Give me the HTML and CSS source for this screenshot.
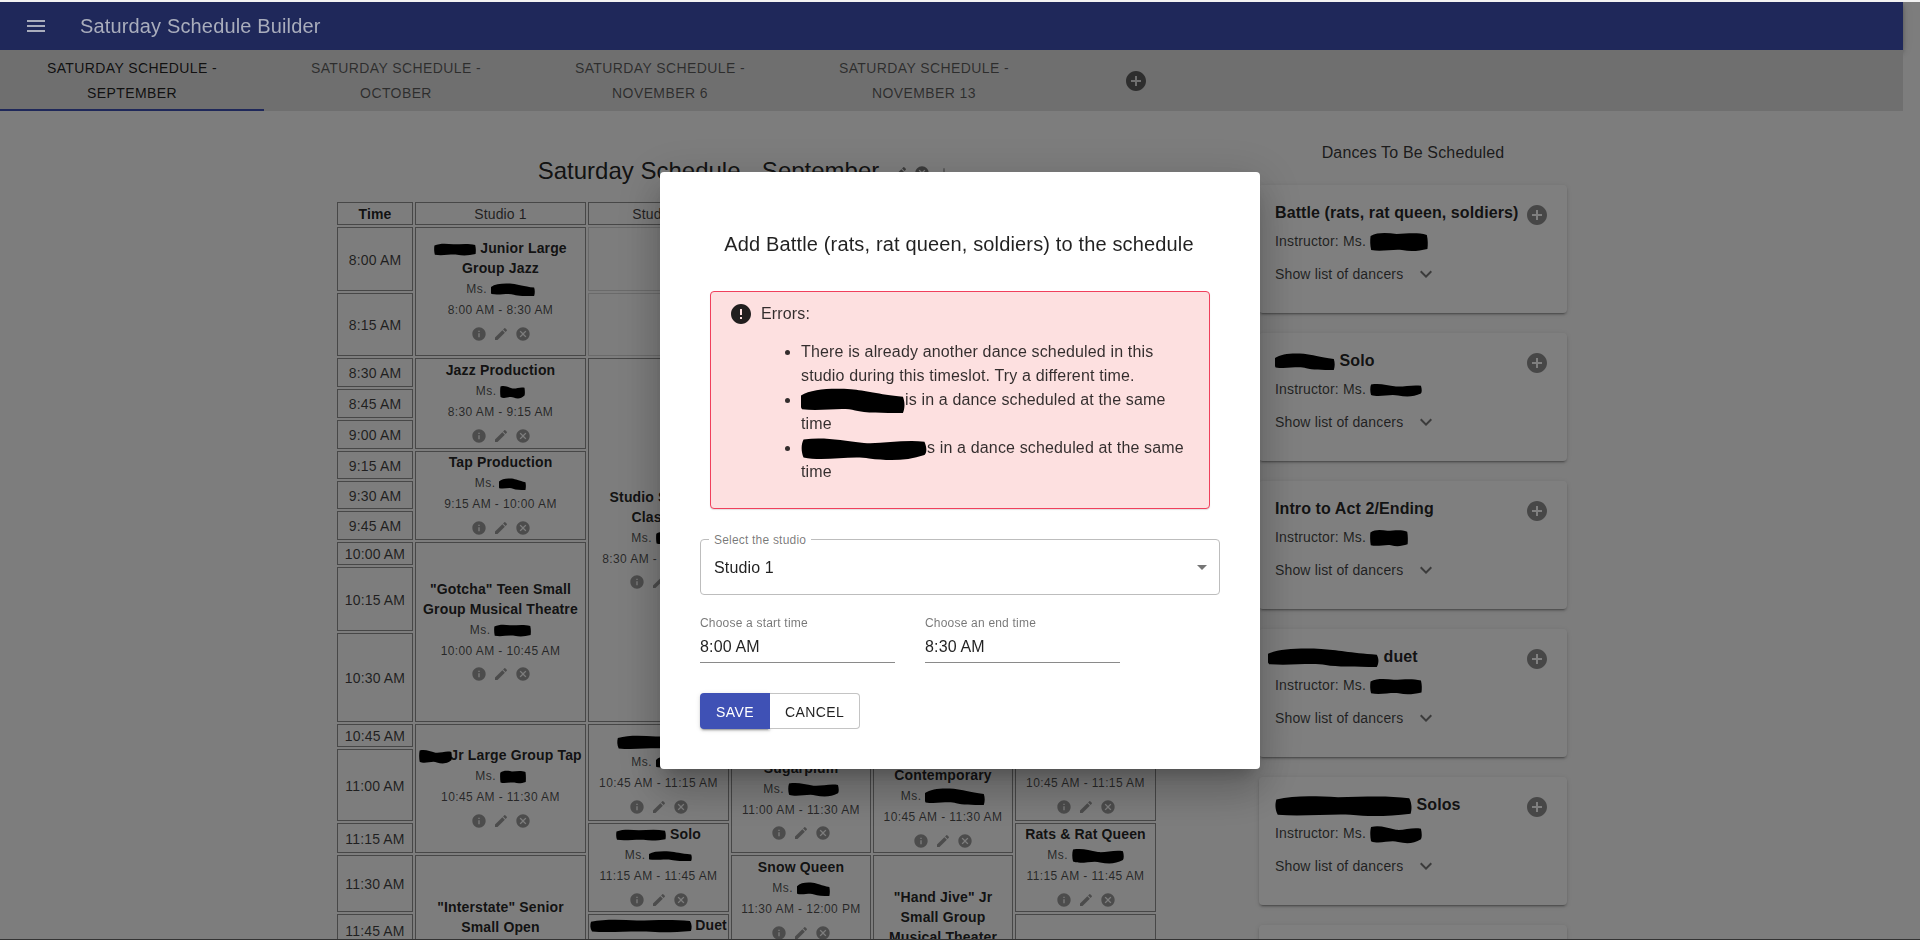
FILE: index.html
```html
<!DOCTYPE html>
<html lang="en">
<head>
<meta charset="utf-8">
<title>Saturday Schedule Builder</title>
<link rel="stylesheet" href="styles.css">
</head>
<body>
<svg class="sprite" aria-hidden="true">
  <symbol id="i-info" viewBox="0 0 24 24"><path d="M12 2C6.48 2 2 6.48 2 12s4.48 10 10 10 10-4.48 10-10S17.52 2 12 2zm1 15h-2v-6h2v6zm0-8h-2V7h2v2z"/></symbol>
  <symbol id="i-edit" viewBox="0 0 24 24"><path d="M3 17.25V21h3.75L17.81 9.94l-3.75-3.75L3 17.25zM20.71 7.04c.39-.39.39-1.02 0-1.41l-2.34-2.34a.9959.9959 0 0 0-1.41 0l-1.83 1.83 3.75 3.75 1.83-1.83z"/></symbol>
  <symbol id="i-cancel" viewBox="0 0 24 24"><path d="M12 2C6.47 2 2 6.47 2 12s4.47 10 10 10 10-4.47 10-10S17.53 2 12 2zm5 13.59L15.59 17 12 13.41 8.41 17 7 15.59 10.59 12 7 8.41 8.41 7 12 10.59 15.59 7 17 8.41 13.41 12 17 15.59z"/></symbol>
  <symbol id="i-addc" viewBox="0 0 24 24"><path d="M12 2C6.48 2 2 6.48 2 12s4.48 10 10 10 10-4.48 10-10S17.52 2 12 2zm5 11h-4v4h-2v-4H7v-2h4V7h2v4h4v2z"/></symbol>
  <symbol id="i-add" viewBox="0 0 24 24"><path d="M19 13h-6v6h-2v-6H5v-2h6V5h2v6h6v2z"/></symbol>
  <symbol id="i-more" viewBox="0 0 24 24"><path d="M16.59 8.59L12 13.17 7.41 8.59 6 10l6 6 6-6z"/></symbol>
  <symbol id="b1" viewBox="0 0 100 20" preserveAspectRatio="none"><path d="M1 4C14 0 30 1 46 2c16 0 34-2 52 1 2 5 2 10 1 14-15 2-28 3-44 1-15-1-36 2-53 0C0 13 0 8 1 4z"/></symbol>
  <symbol id="b2" viewBox="0 0 100 20" preserveAspectRatio="none"><path d="M0 6C10 1 28 0 48 1c14 1 26 4 50 6 2 4 2 9 0 13-20 0-36 0-46-2-12-3-32 1-51-1C-1 15-1 10 0 6z"/></symbol>
  <symbol id="b3" viewBox="0 0 100 20" preserveAspectRatio="none"><path d="M2 2c18-2 30 1 48 3 14 1 32-3 48-1 2 5 2 9 0 11-14 5-28 5-44 3-14-3-36 3-52-1C0 12 0 6 2 2z"/></symbol>
</svg>

<header class="appbar">
  <svg class="menu-icon" viewBox="0 0 24 24" width="24" height="24"><path d="M3 18h18v-2H3v2zm0-5h18v-2H3v2zm0-7v2h18V6H3z"/></svg>
  <div class="brand">Saturday Schedule Builder</div>
</header>

<nav class="tabbar">
  <div class="tab active">Saturday Schedule - September</div>
  <div class="tab">Saturday Schedule - October</div>
  <div class="tab">Saturday Schedule - November 6</div>
  <div class="tab">Saturday Schedule - November 13</div>
  <svg class="tab-add" width="24" height="24"><use href="#i-addc"/></svg>
</nav>

<main class="main">
  <section class="schedule">
    <div class="sched-title">
      <h1>Saturday Schedule - September</h1>
      <svg class="ti first" width="16" height="16"><use href="#i-edit"/></svg>
      <svg class="ti" width="16" height="16"><use href="#i-cancel"/></svg>
      <svg class="ti plus" width="16" height="16"><use href="#i-add"/></svg>
    </div>
    <table class="grid">
      <colgroup>
        <col class="c-time"><col class="c-s1"><col class="c-s2"><col class="c-s3"><col class="c-s4"><col class="c-s5">
      </colgroup>
      <thead>
        <tr class="h23"><th>Time</th><td>Studio 1</td><td>Studio 2</td><td>Studio 3</td><td>Studio 4</td><td>Studio 5</td></tr>
      </thead>
      <tbody>
        <tr class="h64"><td>8:00 AM</td>
          <td rowspan="2" class="dance"><div class="d-title"><svg class="blot" width="42" height="13"><use href="#b1"/></svg> Junior Large<br>Group Jazz</div><div class="d-sub">Ms. <svg class="blot" width="44" height="13"><use href="#b2"/></svg></div><div class="d-sub">8:00 AM - 8:30 AM</div><div class="d-ico"><svg width="16" height="16"><use href="#i-info"/></svg><svg width="16" height="16"><use href="#i-edit"/></svg><svg width="16" height="16"><use href="#i-cancel"/></svg></div></td>
          <td class="empty"></td><td class="empty"></td><td class="empty"></td><td class="empty"></td></tr>
        <tr class="h63"><td>8:15 AM</td><td class="empty"></td><td class="empty"></td><td class="empty"></td><td class="empty"></td></tr>
        <tr class="h29"><td>8:30 AM</td>
          <td rowspan="3" class="dance"><div class="d-title">Jazz Production</div><div class="d-sub">Ms. <svg class="blot" width="25" height="14"><use href="#b3"/></svg></div><div class="d-sub">8:30 AM - 9:15 AM</div><div class="d-ico"><svg width="16" height="16"><use href="#i-info"/></svg><svg width="16" height="16"><use href="#i-edit"/></svg><svg width="16" height="16"><use href="#i-cancel"/></svg></div></td>
          <td rowspan="9" class="dance"><div class="d-title">Studio Stretch Classes</div><div class="d-sub">Ms. <svg class="blot" width="30" height="14"><use href="#b1"/></svg></div><div class="d-sub">8:30 AM - 10:30 AM</div><div class="d-ico"><svg width="16" height="16"><use href="#i-info"/></svg><svg width="16" height="16"><use href="#i-edit"/></svg><svg width="16" height="16"><use href="#i-cancel"/></svg></div></td>
          <td class="empty" rowspan="9"></td><td class="empty" rowspan="9"></td><td class="empty" rowspan="9"></td></tr>
        <tr class="h29"><td>8:45 AM</td></tr>
        <tr class="h29"><td>9:00 AM</td></tr>
        <tr class="h28"><td>9:15 AM</td>
          <td rowspan="3" class="dance"><div class="d-title">Tap Production</div><div class="d-sub">Ms. <svg class="blot" width="27" height="12"><use href="#b2"/></svg></div><div class="d-sub">9:15 AM - 10:00 AM</div><div class="d-ico"><svg width="16" height="16"><use href="#i-info"/></svg><svg width="16" height="16"><use href="#i-edit"/></svg><svg width="16" height="16"><use href="#i-cancel"/></svg></div></td></tr>
        <tr class="h28"><td>9:30 AM</td></tr>
        <tr class="h29"><td>9:45 AM</td></tr>
        <tr class="h23"><td>10:00 AM</td>
          <td rowspan="3" class="dance"><div class="d-title">"Gotcha" Teen Small<br>Group Musical Theatre</div><div class="d-sub">Ms. <svg class="blot" width="37" height="13"><use href="#b1"/></svg></div><div class="d-sub">10:00 AM - 10:45 AM</div><div class="d-ico"><svg width="16" height="16"><use href="#i-info"/></svg><svg width="16" height="16"><use href="#i-edit"/></svg><svg width="16" height="16"><use href="#i-cancel"/></svg></div></td></tr>
        <tr class="h64"><td>10:15 AM</td></tr>
        <tr class="h89"><td>10:30 AM</td></tr>
        <tr class="h23"><td>10:45 AM</td>
          <td rowspan="3" class="dance"><div class="d-title"><svg class="blot overlap" width="33" height="15"><use href="#b3"/></svg>Jr Large Group Tap</div><div class="d-sub">Ms. <svg class="blot" width="26" height="14"><use href="#b1"/></svg></div><div class="d-sub">10:45 AM - 11:30 AM</div><div class="d-ico"><svg width="16" height="16"><use href="#i-info"/></svg><svg width="16" height="16"><use href="#i-edit"/></svg><svg width="16" height="16"><use href="#i-cancel"/></svg></div></td>
          <td rowspan="2" class="dance low"><div class="d-title"><svg class="blot" width="84" height="15"><use href="#b1"/></svg></div><div class="d-sub">Ms. <svg class="blot" width="30" height="13"><use href="#b2"/></svg></div><div class="d-sub">10:45 AM - 11:15 AM</div><div class="d-ico"><svg width="16" height="16"><use href="#i-info"/></svg><svg width="16" height="16"><use href="#i-edit"/></svg><svg width="16" height="16"><use href="#i-cancel"/></svg></div></td>
          <td class="empty"></td>
          <td rowspan="3" class="dance"><div class="d-title">Teen Small<br>Group<br>Contemporary</div><div class="d-sub">Ms. <svg class="blot" width="60" height="17"><use href="#b2"/></svg></div><div class="d-sub">10:45 AM - 11:30 AM</div><div class="d-ico"><svg width="16" height="16"><use href="#i-info"/></svg><svg width="16" height="16"><use href="#i-edit"/></svg><svg width="16" height="16"><use href="#i-cancel"/></svg></div></td>
          <td rowspan="2" class="dance low"><div class="d-title">Mice</div><div class="d-sub">Ms. <svg class="blot" width="44" height="13"><use href="#b1"/></svg></div><div class="d-sub">10:45 AM - 11:15 AM</div><div class="d-ico"><svg width="16" height="16"><use href="#i-info"/></svg><svg width="16" height="16"><use href="#i-edit"/></svg><svg width="16" height="16"><use href="#i-cancel"/></svg></div></td></tr>
        <tr class="h72"><td>11:00 AM</td>
          <td rowspan="2" class="dance"><div class="d-title">Sugarplum</div><div class="d-sub">Ms. <svg class="blot" width="51" height="15"><use href="#b3"/></svg></div><div class="d-sub">11:00 AM - 11:30 AM</div><div class="d-ico"><svg width="16" height="16"><use href="#i-info"/></svg><svg width="16" height="16"><use href="#i-edit"/></svg><svg width="16" height="16"><use href="#i-cancel"/></svg></div></td></tr>
        <tr class="h30"><td>11:15 AM</td>
          <td rowspan="2" class="dance"><div class="d-title"><svg class="blot" width="50" height="12"><use href="#b1"/></svg> Solo</div><div class="d-sub">Ms. <svg class="blot" width="43" height="10"><use href="#b2"/></svg></div><div class="d-sub">11:15 AM - 11:45 AM</div><div class="d-ico"><svg width="16" height="16"><use href="#i-info"/></svg><svg width="16" height="16"><use href="#i-edit"/></svg><svg width="16" height="16"><use href="#i-cancel"/></svg></div></td>
          <td rowspan="2" class="dance"><div class="d-title">Rats &amp; Rat Queen</div><div class="d-sub">Ms. <svg class="blot" width="52" height="16"><use href="#b3"/></svg></div><div class="d-sub">11:15 AM - 11:45 AM</div><div class="d-ico"><svg width="16" height="16"><use href="#i-info"/></svg><svg width="16" height="16"><use href="#i-edit"/></svg><svg width="16" height="16"><use href="#i-cancel"/></svg></div></td></tr>
        <tr class="h57"><td>11:30 AM</td>
          <td rowspan="4" class="dance"><div class="d-title">"Interstate" Senior<br>Small Open</div><div class="d-sub">Ms. <svg class="blot" width="44" height="13"><use href="#b1"/></svg></div><div class="d-sub">11:30 AM - 12:15 PM</div><div class="d-ico"><svg width="16" height="16"><use href="#i-info"/></svg><svg width="16" height="16"><use href="#i-edit"/></svg><svg width="16" height="16"><use href="#i-cancel"/></svg></div></td>
          <td rowspan="2" class="dance"><div class="d-title">Snow Queen</div><div class="d-sub">Ms. <svg class="blot" width="33" height="14"><use href="#b2"/></svg></div><div class="d-sub">11:30 AM - 12:00 PM</div><div class="d-ico"><svg width="16" height="16"><use href="#i-info"/></svg><svg width="16" height="16"><use href="#i-edit"/></svg><svg width="16" height="16"><use href="#i-cancel"/></svg></div></td>
          <td rowspan="4" class="dance"><div class="d-title">"Hand Jive" Jr<br>Small Group<br>Musical Theater</div><div class="d-sub">Ms. <svg class="blot" width="44" height="13"><use href="#b1"/></svg></div><div class="d-sub">11:30 AM - 12:15 PM</div><div class="d-ico"><svg width="16" height="16"><use href="#i-info"/></svg><svg width="16" height="16"><use href="#i-edit"/></svg><svg width="16" height="16"><use href="#i-cancel"/></svg></div></td></tr>
        <tr class="h32"><td>11:45 AM</td>
          <td rowspan="2" class="dance"><div class="d-title nowrap"><svg class="blot tight" width="102" height="14"><use href="#b1"/></svg> Duet</div><div class="d-sub">Ms. <svg class="blot" width="44" height="13"><use href="#b2"/></svg></div><div class="d-sub">11:45 AM - 12:15 PM</div><div class="d-ico"><svg width="16" height="16"><use href="#i-info"/></svg><svg width="16" height="16"><use href="#i-edit"/></svg><svg width="16" height="16"><use href="#i-cancel"/></svg></div></td>
          <td class="plain" rowspan="3"></td></tr>
        <tr class="h55"><td>12:00 PM</td><td class="plain" rowspan="2"></td></tr>
        <tr class="h40"><td>12:15 PM</td><td class="plain"></td></tr>
      </tbody>
    </table>
  </section>

  <aside class="sidebar">
    <h2>Dances To Be Scheduled</h2>
    <article class="card">
      <div class="card-head"><h3>Battle (rats, rat queen, soldiers)</h3><svg width="24" height="24"><use href="#i-addc"/></svg></div>
      <p class="instr">Instructor: Ms. <svg class="blot" width="58" height="20"><use href="#b1"/></svg></p>
      <div class="show">Show list of dancers<svg width="24" height="24"><use href="#i-more"/></svg></div>
    </article>
    <article class="card">
      <div class="card-head"><h3><svg class="blot" width="60" height="17"><use href="#b2"/></svg> Solo</h3><svg width="24" height="24"><use href="#i-addc"/></svg></div>
      <p class="instr">Instructor: Ms. <svg class="blot" width="52" height="14"><use href="#b3"/></svg></p>
      <div class="show">Show list of dancers<svg width="24" height="24"><use href="#i-more"/></svg></div>
    </article>
    <article class="card">
      <div class="card-head"><h3>Intro to Act 2/Ending</h3><svg width="24" height="24"><use href="#i-addc"/></svg></div>
      <p class="instr">Instructor: Ms. <svg class="blot" width="38" height="18"><use href="#b1"/></svg></p>
      <div class="show">Show list of dancers<svg width="24" height="24"><use href="#i-more"/></svg></div>
    </article>
    <article class="card">
      <div class="card-head"><h3><svg class="blot outdent" width="111" height="19"><use href="#b2"/></svg> duet</h3><svg width="24" height="24"><use href="#i-addc"/></svg></div>
      <p class="instr">Instructor: Ms. <svg class="blot" width="52" height="17"><use href="#b1"/></svg></p>
      <div class="show">Show list of dancers<svg width="24" height="24"><use href="#i-more"/></svg></div>
    </article>
    <article class="card">
      <div class="card-head"><h3><svg class="blot" width="137" height="22"><use href="#b1"/></svg> Solos</h3><svg width="24" height="24"><use href="#i-addc"/></svg></div>
      <p class="instr">Instructor: Ms. <svg class="blot" width="52" height="19"><use href="#b3"/></svg></p>
      <div class="show">Show list of dancers<svg width="24" height="24"><use href="#i-more"/></svg></div>
    </article>
    <article class="card"></article>
  </aside>
</main>

<div class="backdrop">
  <div class="dialog">
    <h2 class="dlg-title">Add Battle (rats, rat queen, soldiers) to the schedule</h2>
    <div class="alert">
      <div class="alert-head">
        <svg width="24" height="24" viewBox="0 0 24 24"><path d="M12 2C6.48 2 2 6.48 2 12s4.48 10 10 10 10-4.48 10-10S17.52 2 12 2zm1 15h-2v-2h2v2zm0-4h-2V7h2v6z"/></svg>
        <span>Errors:</span>
      </div>
      <ul class="alert-list">
        <li>There is already another dance scheduled in this studio during this timeslot. Try a different time.</li>
        <li><svg class="blot" width="104" height="25"><use href="#b2"/></svg>is in a dance scheduled at the same time</li>
        <li><svg class="blot" width="126" height="24"><use href="#b3"/></svg>s in a dance scheduled at the same time</li>
      </ul>
    </div>
    <div class="select">
      <span class="select-label">Select the studio</span>
      <span class="select-value">Studio 1</span>
      <svg width="24" height="24" viewBox="0 0 24 24"><path d="M7 10l5 5 5-5z"/></svg>
    </div>
    <div class="times">
      <div class="field"><label>Choose a start time</label><div class="value">8:00 AM</div></div>
      <div class="field"><label>Choose an end time</label><div class="value">8:30 AM</div></div>
    </div>
    <div class="actions">
      <button class="btn save">Save</button>
      <button class="btn cancel">Cancel</button>
    </div>
  </div>
</div>
</body>
</html>
```

FILE: styles.css
```css
* { box-sizing: border-box; }
html, body { height: 100%; }
body {
  margin: 0;
  height: 940px;
  overflow: hidden;
  border-top: 2px solid #f2f2f2;
  background: #fafafa;
  font-family: "Liberation Sans", Arial, sans-serif;
  color: rgba(0, 0, 0, .87);
}
svg { fill: currentColor; }
.sprite { display: none; }
h1, h2, h3, p, ul { margin: 0; padding: 0; font-weight: 400; }

/* App bar */
.appbar {
  width: 1903px;
  height: 48px;
  background: #3f51b5;
  display: flex;
  align-items: center;
  padding-left: 24px;
  gap: 32px;
  box-shadow: 0 2px 4px -1px rgba(0,0,0,.2), 0 4px 5px 0 rgba(0,0,0,.14), 0 1px 10px 0 rgba(0,0,0,.12);
}
.menu-icon, .brand { position: relative; z-index: 20; color: #a9adbc; }
.brand { font-size: 20px; letter-spacing: .15px; }

/* Tabs */
.tabbar {
  width: 1903px;
  height: 61px;
  background: #dfdfdf;
  display: flex;
  align-items: center;
}
.tab {
  width: 264px;
  height: 61px;
  padding: 6px 12px;
  text-align: center;
  font-size: 14px;
  line-height: 25px;
  letter-spacing: .4px;
  text-transform: uppercase;
  color: rgba(0, 0, 0, .6);
}
.tab.active { color: rgba(0, 0, 0, .87); border-bottom: 2px solid #3f51b5; }
.tab-add { margin-left: 68px; color: #5c5c5c; }

/* Main */
.main {
  display: flex;
  align-items: flex-start;
  padding-left: 335px;
}
.schedule { width: 823px; padding-top: 39px; flex: none; }
.sched-title {
  height: 42px;
  margin-bottom: 8px;
  display: flex;
  align-items: center;
  justify-content: center;
}
.sched-title h1 { font-size: 24px; }
.ti { color: #777; margin-left: 6px; position: relative; top: 2px; }
.ti.first { margin-left: 13px; }
.ti.plus { color: #999; margin-right: 3px; }

.grid {
  table-layout: fixed;
  width: 823px;
  border-collapse: separate;
  border-spacing: 2px;
  font-size: 14px;
  letter-spacing: .15px;
  text-align: center;
}
.c-time { width: 76px; }
.c-s1 { width: 171px; }
.c-s2 { width: 141px; }
.c-s3 { width: 140px; }
.c-s4 { width: 140px; }
.c-s5 { width: 141px; }
.grid td, .grid th {
  border: 1px solid #8e8e8e;
  padding: 1px 0 0;
  vertical-align: middle;
}
.grid th { font-weight: 700; }
.grid td { color: rgba(0, 0, 0, .75); }
.grid td.dance { padding: 0; }
.grid td.low { padding-top: 4px; }
.grid td.empty { border-color: #d4d4d4; padding: 0; }
.grid td.plain { border-color: #8e8e8e; padding: 0; }
.h23 { height: 23px; }
.h28 { height: 28px; }
.h29 { height: 29px; }
.h30 { height: 30px; }
.h32 { height: 32px; }
.h40 { height: 40px; }
.h55 { height: 55px; }
.h57 { height: 57px; }
.h63 { height: 63px; }
.h64 { height: 64px; }
.h72 { height: 72px; }
.h89 { height: 89px; }

.d-title {
  font-size: 14px;
  font-weight: 700;
  line-height: 20px;
  letter-spacing: .15px;
  color: rgba(0, 0, 0, .87);
}
.d-title.nowrap { white-space: nowrap; }
.d-sub {
  height: 21px;
  padding-top: 1px;
  font-size: 12px;
  line-height: 21px;
  letter-spacing: .4px;
  color: rgba(0, 0, 0, .7);
}
.d-ico {
  height: 25px;
  padding-top: 2px;
  display: flex;
  align-items: center;
  justify-content: center;
  gap: 6px;
  color: #999;
}
.blot { color: #000; vertical-align: middle; margin-block: -8px; }
.blot.overlap { margin-right: -2px; position: relative; z-index: 1; }
.blot.outdent { margin-left: -7px; }
.blot.tight { margin-right: -1px; }

/* Sidebar */
.sidebar { width: 308px; margin-left: 101px; padding-top: 30px; flex: none; }
.sidebar h2 {
  font-size: 16px;
  line-height: 24px;
  letter-spacing: .15px;
  text-align: center;
  margin-bottom: 20px;
  color: rgba(0, 0, 0, .8);
}
.card {
  height: 128px;
  margin-bottom: 20px;
  padding: 14px 16px 0;
  background: #fff;
  border-radius: 4px;
  box-shadow: 0 3px 1px -2px rgba(0,0,0,.2), 0 2px 2px 0 rgba(0,0,0,.14), 0 1px 5px 0 rgba(0,0,0,.12);
}
.card-head {
  display: flex;
  justify-content: space-between;
  height: 24px;
  margin-right: 2px;
  color: #8f8f8f;
}
.card-head svg { flex: none; margin-top: 4px; }
.card-head svg.blot { margin-top: -8px; color: #000; }
.card-head h3 {
  font-size: 16px;
  font-weight: 700;
  line-height: 27px;
  letter-spacing: .1px;
  color: rgba(0, 0, 0, .87);
  white-space: nowrap;
}
.instr {
  margin-top: 8px;
  font-size: 14px;
  line-height: 20px;
  letter-spacing: .15px;
  color: rgba(0, 0, 0, .75);
}
.show {
  margin-top: 13px;
  height: 20px;
  display: flex;
  align-items: center;
  gap: 11px;
  font-size: 14px;
  letter-spacing: .15px;
  color: rgba(0, 0, 0, .75);
}
.show svg { color: #777; }

/* Dialog */
.backdrop {
  position: fixed;
  top: 2px;
  left: 0;
  right: 0;
  bottom: 0;
  z-index: 10;
  background: rgba(0, 0, 0, .5);
  border-bottom: 1px solid #333;
  display: flex;
  align-items: center;
  justify-content: center;
}
.dialog {
  width: 600px;
  height: 597px;
  padding: 56px 40px 0;
  background: #fff;
  border-radius: 4px;
  box-shadow: 0 11px 15px -7px rgba(0,0,0,.2), 0 24px 38px 3px rgba(0,0,0,.14), 0 9px 46px 8px rgba(0,0,0,.12);
}
.dlg-title {
  font-size: 20px;
  line-height: 32px;
  letter-spacing: .15px;
  text-align: center;
  color: rgba(0, 0, 0, .87);
  margin-bottom: 31px;
  margin-left: -1px;
  margin-right: 1px;
}
.alert {
  width: 500px;
  height: 218px;
  margin-left: 10px;
  padding: 10px 19px 0 20px;
  background: #fde0e0;
  border: 1px solid #f0405c;
  border-radius: 4px;
  box-shadow: 0 1px 1px rgba(0,0,0,.12);
  font-size: 16px;
  letter-spacing: .15px;
  line-height: 24px;
  color: rgba(0, 0, 0, .8);
}
.alert-head {
  display: flex;
  align-items: center;
  gap: 8px;
  margin-left: -2px;
}
.alert-head svg { color: #211e1e; }
.alert-list { margin: 14px 0 0 50px; padding-left: 20px; }
.select {
  position: relative;
  margin-top: 30px;
  width: 520px;
  height: 56px;
  border: 1px solid #bdbdbd;
  border-radius: 4px;
  padding: 0 5px 0 13px;
  display: flex;
  align-items: center;
  justify-content: space-between;
  font-size: 16px;
  letter-spacing: .15px;
}
.select svg { color: #757575; }
.select-value { padding-top: 2px; }
.select-label {
  position: absolute;
  top: -8px;
  left: 8px;
  padding: 0 5px;
  background: #fff;
  font-size: 12px;
  line-height: 16px;
  letter-spacing: .2px;
  color: rgba(0, 0, 0, .54);
}
.times { display: flex; gap: 30px; margin-top: 20px; }
.field { width: 195px; height: 48px; border-bottom: 1px solid #8a8a8a; }
.field label {
  display: block;
  font-size: 12px;
  line-height: 16px;
  letter-spacing: .2px;
  color: rgba(0, 0, 0, .54);
}
.field .value {
  margin-top: 4px;
  font-size: 16px;
  line-height: 24px;
  letter-spacing: .15px;
}
.actions { display: flex; margin-top: 30px; }
.btn {
  height: 36px;
  font-family: inherit;
  font-size: 14px;
  letter-spacing: .4px;
  text-transform: uppercase;
  border-radius: 4px;
  padding: 1px 0 0;
}
.btn.save {
  width: 70px;
  border: 0;
  background: #3f51b5;
  color: #fff;
  border-radius: 4px 0 0 4px;
  box-shadow: 0 3px 1px -2px rgba(0,0,0,.2), 0 2px 2px 0 rgba(0,0,0,.14), 0 1px 5px 0 rgba(0,0,0,.12);
}
.btn.cancel {
  width: 90px;
  border: 1px solid #c4c4c4;
  border-left: 0;
  background: #fff;
  color: rgba(0, 0, 0, .87);
  border-radius: 0 4px 4px 0;
}
```
